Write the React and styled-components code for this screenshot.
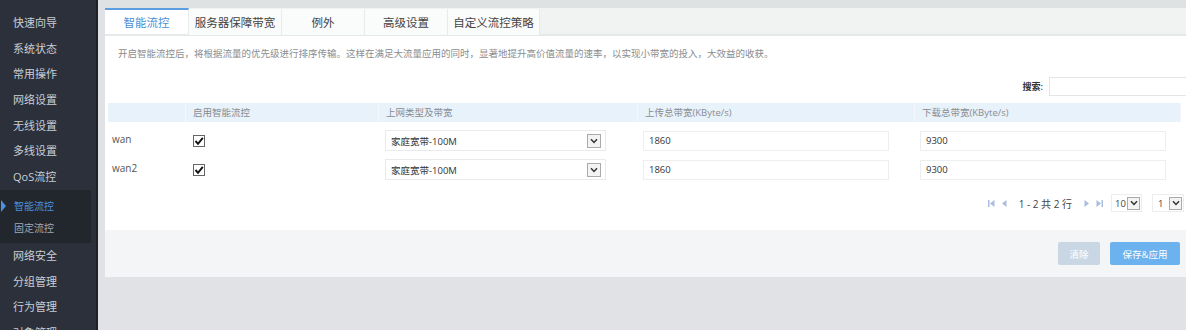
import styled, { createGlobalStyle } from 'styled-components';

const GlobalStyle = createGlobalStyle`
  html, body {
    margin: 0;
    padding: 0;
    width: 1186px;
    height: 330px;
    overflow: hidden;
    font-family: 'Open Sans', 'Noto Sans CJK SC', sans-serif;
  }
  * { box-sizing: border-box; }
`;

const Page = styled.div`
  display: flex;
  width: 1186px;
  height: 330px;
  overflow: hidden;
`;

const Sidebar = styled.nav`
  width: 98px;
  flex-shrink: 0;
  background: #2b303a;
  border-right: 2px solid #1e2228;
  padding-top: 10px;
`;

const NavItem = styled.div`
  height: 25.7px;
  line-height: 25.7px;
  padding-left: 13px;
  font-size: 11px;
  color: #c9ced6;
  white-space: nowrap;
`;

const SubMenu = styled.div`
  width: 91px;
  background: #22262d;
  padding: 5px 0 4px;
`;

const SubItem = styled.div`
  position: relative;
  height: 22px;
  line-height: 22px;
  padding-left: 14px;
  font-size: 10px;
  color: ${(p) => (p.$active ? '#4d90e3' : '#a2a8b1')};

  &::before {
    content: '';
    display: ${(p) => (p.$active ? 'block' : 'none')};
    position: absolute;
    left: 1px;
    top: 5px;
    border-left: 5px solid #4d90e3;
    border-top: 6px solid transparent;
    border-bottom: 6px solid transparent;
  }
`;

const Main = styled.main`
  flex: 1;
  background: #e1e2e6;
  padding-left: 7px;
  overflow: hidden;
  border-top: 8px solid #dfe2e2;
`;

const Panel = styled.section`
  width: 1088px;
`;

const TabBar = styled.div`
  display: flex;
  height: 28px;
  background: #f1f3f3;
  border-bottom: 2px solid #e6e9ea;
`;

const Tab = styled.div`
  width: ${(p) => p.$w}px;
  height: 26px;
  margin-top: ${(p) => (p.$active ? 0 : 1)}px;
  display: flex;
  align-items: center;
  justify-content: center;
  font-size: 11.5px;
  color: ${(p) => (p.$active ? '#4b8fd8' : '#444')};
  background: ${(p) => (p.$active ? '#fff' : '#fafbfb')};
  border-top: ${(p) => (p.$active ? '2px solid #5b9fe2' : 'none')};
  border-right: 1px solid #e8ebec;
`;

const Content = styled.div`
  background: #fff;
  padding: 11px 12px 18px 3px;
`;

const Desc = styled.p`
  margin: 0 0 0 10px;
  font-size: 9.5px;
  color: #8a8d90;
  line-height: 14px;
`;

const SearchRow = styled.div`
  display: flex;
  justify-content: flex-end;
  align-items: center;
  gap: 6px;
  margin: 16px -28px 7px 0;
  font-size: 9px;
  color: #333;
  font-weight: 600;
`;

const SearchInput = styled.div`
  width: 160px;
  height: 19px;
  border: 1px solid #e2e4e6;
  background: #fff;
`;

const Grid = styled.div`
  display: grid;
  grid-template-columns: 78px 193px 259px 277px 1fr;
  align-items: center;
`;

const HeadRow = styled(Grid)`
  height: 19px;
  margin-bottom: 4px;
`;

const HeadCell = styled.div`
  height: 19px;
  line-height: 19px;
  background: #e8f2fb;
  padding-left: 7px;
  font-size: 9.5px;
  color: #888c90;
  border-right: 1px solid #f4f8fc;
`;

const Row = styled(Grid)`
  height: 29px;
  font-size: 10px;
  color: #555;
`;

const Label = styled.div`
  padding-left: 4px;
  padding-bottom: 3px;
`;

const CheckCell = styled.div`
  padding-left: 7px;
  display: flex;
`;

const Check = styled.span`
  width: 12px;
  height: 12px;
  border: 1px solid #666;
  background: #fff;
  display: flex;
  align-items: center;
  justify-content: center;
`;

const SelectBox = styled.div`
  margin-left: 6px;
  width: 221px;
  height: 21px;
  border: 1px solid #e8eaeb;
  display: flex;
  align-items: center;
  justify-content: space-between;
  padding: 0 4px 0 5px;
  font-size: 9.5px;
  color: #333;
`;

const Arrow = styled.span`
  width: ${(p) => p.$size || 14}px;
  height: ${(p) => p.$size || 14}px;
  flex-shrink: 0;
  border: 1px solid #a8abae;
  background: #f3f3f3;
  display: flex;
  align-items: center;
  justify-content: center;
`;

const Field = styled.div`
  margin-left: 5px;
  width: 246px;
  height: 20px;
  line-height: 18px;
  border: 1px solid #eceeef;
  padding-left: 5px;
  font-size: 9.5px;
  color: #333;
`;

const Pager = styled.div`
  display: flex;
  justify-content: flex-end;
  align-items: center;
  margin-top: 10px;
  margin-right: -3px;
  font-size: 10px;
  color: #444;
  height: 18px;
`;

const PageIcons = styled.span`
  display: flex;
  gap: 5px;
  margin-right: ${(p) => p.$mr}px;
`;

const PageText = styled.span`
  margin-right: 12px;
`;

const MiniSelect = styled.div`
  width: ${(p) => p.$w}px;
  height: 18px;
  margin-left: ${(p) => p.$ml}px;
  border: 1px solid #ebedee;
  display: flex;
  align-items: center;
  justify-content: space-between;
  padding: 0 1px 0 ${(p) => p.$pl}px;
  font-size: 9.5px;
  white-space: nowrap;
`;

const Footer = styled.div`
  height: 47px;
  background: #f4f5f7;
  display: flex;
  justify-content: flex-end;
  align-items: center;
  gap: 10px;
  padding-right: 13px;
`;

const Button = styled.button`
  height: 23px;
  width: ${(p) => p.$w}px;
  border: none;
  border-radius: 2px;
  color: #fff;
  font-size: 9.5px;
  font-family: inherit;
  background: ${(p) => (p.$primary ? '#6bb2ee' : '#c9d7e5')};
`;

const CheckMark = () => (
  <svg width="10" height="10" viewBox="0 0 10 10">
    <path d="M1.5 5 L4 7.8 L8.8 1.8" stroke="#111" strokeWidth="1.9" fill="none" />
  </svg>
);

const Chevron = () => (
  <svg width="8" height="6" viewBox="0 0 8 6">
    <path d="M1 1.2 L4 4.4 L7 1.2" stroke="#333" strokeWidth="1.5" fill="none" />
  </svg>
);

const PagerIcon = ({ dir, bar }) => (
  <svg width="7" height="9" viewBox="0 0 7 9">
    {dir === 'left' ? (
      <>
        {bar && <rect x="0" y="1" width="1.5" height="7" fill="#a9bddd" />}
        <path d="M6.5 1 L2 4.5 L6.5 8 Z" fill="#a9bddd" />
      </>
    ) : (
      <>
        <path d="M0.5 1 L5 4.5 L0.5 8 Z" fill="#a9bddd" />
        {bar && <rect x="5.5" y="1" width="1.5" height="7" fill="#a9bddd" />}
      </>
    )}
  </svg>
);

const navTop = ['快速向导', '系统状态', '常用操作', '网络设置', '无线设置', '多线设置', 'QoS流控'];
const navBottom = ['网络安全', '分组管理', '行为管理', '对象管理'];

const tabs = [
  { name: '智能流控', w: 84 },
  { name: '服务器保障带宽', w: 93 },
  { name: '例外', w: 83 },
  { name: '高级设置', w: 83 },
  { name: '自定义流控策略', w: 92 },
];

const rows = [
  { name: 'wan', up: '1860', down: '9300' },
  { name: 'wan2', up: '1860', down: '9300' },
];

export default function App() {
  return (
    <>
      <GlobalStyle />
      <Page>
        <Sidebar>
          {navTop.map((n) => (
            <NavItem key={n}>{n}</NavItem>
          ))}
          <SubMenu>
            <SubItem $active>智能流控</SubItem>
            <SubItem>固定流控</SubItem>
          </SubMenu>
          {navBottom.map((n) => (
            <NavItem key={n}>{n}</NavItem>
          ))}
        </Sidebar>
        <Main>
          <Panel>
            <TabBar>
              {tabs.map((t, i) => (
                <Tab key={t.name} $w={t.w} $active={i === 0}>
                  {t.name}
                </Tab>
              ))}
            </TabBar>
            <Content>
              <Desc>
                开启智能流控后，将根据流量的优先级进行排序传输。这样在满足大流量应用的同时，显著地提升高价值流量的速率，以实现小带宽的投入，大效益的收获。
              </Desc>
              <SearchRow>
                <span>搜索:</span>
                <SearchInput />
              </SearchRow>
              <HeadRow>
                <HeadCell />
                <HeadCell>启用智能流控</HeadCell>
                <HeadCell>上网类型及带宽</HeadCell>
                <HeadCell>上传总带宽(KByte/s)</HeadCell>
                <HeadCell>下载总带宽(KByte/s)</HeadCell>
              </HeadRow>
              {rows.map((r) => (
                <Row key={r.name}>
                  <Label>{r.name}</Label>
                  <CheckCell>
                    <Check>
                      <CheckMark />
                    </Check>
                  </CheckCell>
                  <SelectBox>
                    <span>家庭宽带-100M</span>
                    <Arrow>
                      <Chevron />
                    </Arrow>
                  </SelectBox>
                  <Field>{r.up}</Field>
                  <Field>{r.down}</Field>
                </Row>
              ))}
              <Pager>
                <PageIcons $mr={12}>
                  <PagerIcon dir="left" bar />
                  <PagerIcon dir="left" />
                </PageIcons>
                <PageText>1 - 2 共 2 行</PageText>
                <PageIcons $mr={0}>
                  <PagerIcon dir="right" />
                  <PagerIcon dir="right" bar />
                </PageIcons>
                <MiniSelect $w={31} $ml={8} $pl={3}>
                  <span>10</span>
                  <Arrow $size={13}>
                    <Chevron />
                  </Arrow>
                </MiniSelect>
                <MiniSelect $w={32} $ml={10} $pl={5}>
                  <span>1</span>
                  <Arrow $size={13}>
                    <Chevron />
                  </Arrow>
                </MiniSelect>
              </Pager>
            </Content>
            <Footer>
              <Button $w={42}>清除</Button>
              <Button $w={70} $primary>
                保存&应用
              </Button>
            </Footer>
          </Panel>
        </Main>
      </Page>
    </>
  );
}
